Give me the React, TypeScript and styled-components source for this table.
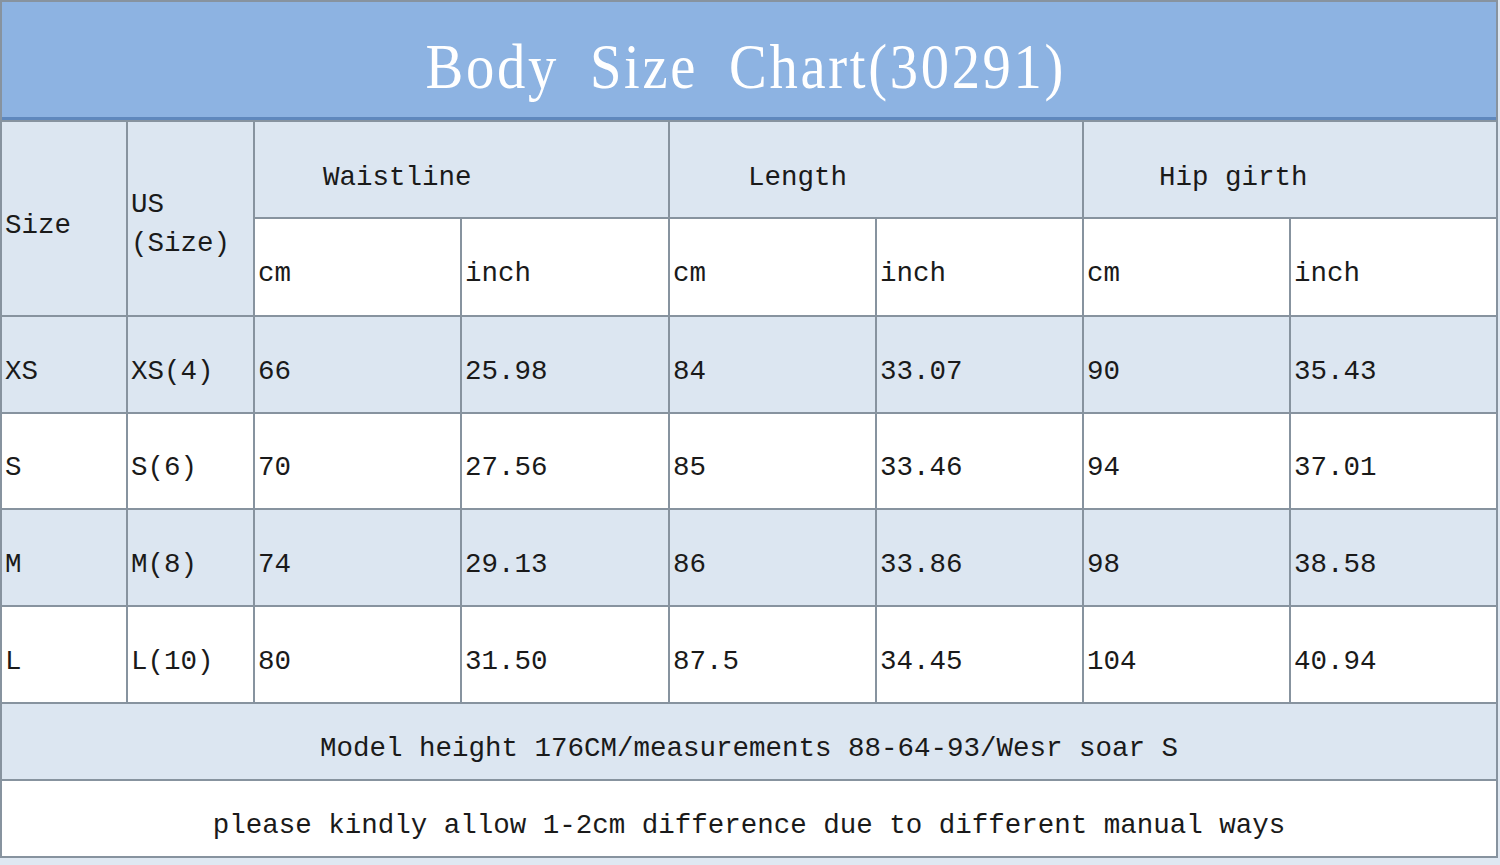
import styled, { createGlobalStyle } from "styled-components";

const GlobalStyle = createGlobalStyle`
  html, body {
    margin: 0;
    padding: 0;
    background: #dfe8f2;
  }
  body {
    font-family: "Liberation Mono", "DejaVu Sans Mono", monospace;
    color: #1a1a1a;
  }
`;

const rows = [
  { size: "XS", us: "XS(4)", vals: ["66", "25.98", "84", "33.07", "90", "35.43"] },
  { size: "S", us: "S(6)", vals: ["70", "27.56", "85", "33.46", "94", "37.01"] },
  { size: "M", us: "M(8)", vals: ["74", "29.13", "86", "33.86", "98", "38.58"] },
  { size: "L", us: "L(10)", vals: ["80", "31.50", "87.5", "34.45", "104", "40.94"] },
];

const groups = [
  { label: "Waistline", indent: 68 },
  { label: "Length", indent: 78 },
  { label: "Hip girth", indent: 75 },
];

const App = () => {
  return (
    <>
      <GlobalStyle />
      <Chart>
        <Title>
          <TitleText>Body Size Chart(30291)</TitleText>
        </Title>

        <Cell $shade="light" $rowSpan={2}>
          Size
        </Cell>
        <Cell $shade="light" $rowSpan={2}>
          <TwoLine>
            US
            <br />
            (Size)
          </TwoLine>
        </Cell>
        {groups.map((g) => (
          <Cell key={g.label} $shade="light" $colSpan={2} $indent={g.indent} $top={16}>
            {g.label}
          </Cell>
        ))}
        {groups.map((g) => [
          <Cell key={g.label + "cm"}>cm</Cell>,
          <Cell key={g.label + "in"}>inch</Cell>,
        ])}

        {rows.map((r, i) => {
          const shade = i % 2 === 0 ? "light" : "white";
          return [
            <Cell key={r.size} $shade={shade}>
              {r.size}
            </Cell>,
            <Cell key={r.size + "us"} $shade={shade}>
              {r.us}
            </Cell>,
            ...r.vals.map((v, j) => (
              <Cell key={r.size + j} $shade={shade}>
                {v}
              </Cell>
            )),
          ];
        })}

        <NoteCell $shade="light">
          Model height 176CM/measurements 88-64-93/Wesr soar S
        </NoteCell>
        <NoteCell>
          please kindly allow 1-2cm difference due to different manual ways
        </NoteCell>
      </Chart>
    </>
  );
};

export default App;

const Chart = styled.div`
  display: grid;
  width: 1498px;
  box-sizing: border-box;
  padding: 2px;
  gap: 2px;
  background: #87939f;
  grid-template-columns: 124px 125px 205px 206px 205px 205px 205px 205px;
  grid-template-rows: 118px 95px 96px 95px 94px 95px 95px 75px 75px;
`;

const Title = styled.div`
  grid-column: 1 / -1;
  background: #8db3e2;
  border-bottom: 3px solid #5f88bd;
  display: flex;
  align-items: center;
  justify-content: center;
  overflow: hidden;
`;

const TitleText = styled.span`
  font-family: "Liberation Serif", "DejaVu Serif", serif;
  font-size: 64px;
  color: #ffffff;
  letter-spacing: 3px;
  word-spacing: 16px;
  display: inline-block;
  transform: scaleX(0.885);
  margin-top: 14px;
  margin-left: -6px;
`;

const Cell = styled.div<{
  $shade?: "light" | "white";
  $rowSpan?: number;
  $colSpan?: number;
  $indent?: number;
  $top?: number;
}>`
  background: ${(p) => (p.$shade === "light" ? "#dce6f1" : "#ffffff")};
  grid-row: ${(p) => (p.$rowSpan ? `span ${p.$rowSpan}` : "auto")};
  grid-column: ${(p) => (p.$colSpan ? `span ${p.$colSpan}` : "auto")};
  display: flex;
  align-items: center;
  padding: ${(p) => p.$top ?? 14}px 0 0 ${(p) => p.$indent ?? 3}px;
  font-size: 27.5px;
  line-height: 1;
  white-space: nowrap;
  box-sizing: border-box;
`;

const TwoLine = styled.div`
  line-height: 39px;
  margin-top: -4px;
`;

const NoteCell = styled(Cell)`
  grid-column: 1 / -1;
  justify-content: center;
  padding-left: 0;
`;
